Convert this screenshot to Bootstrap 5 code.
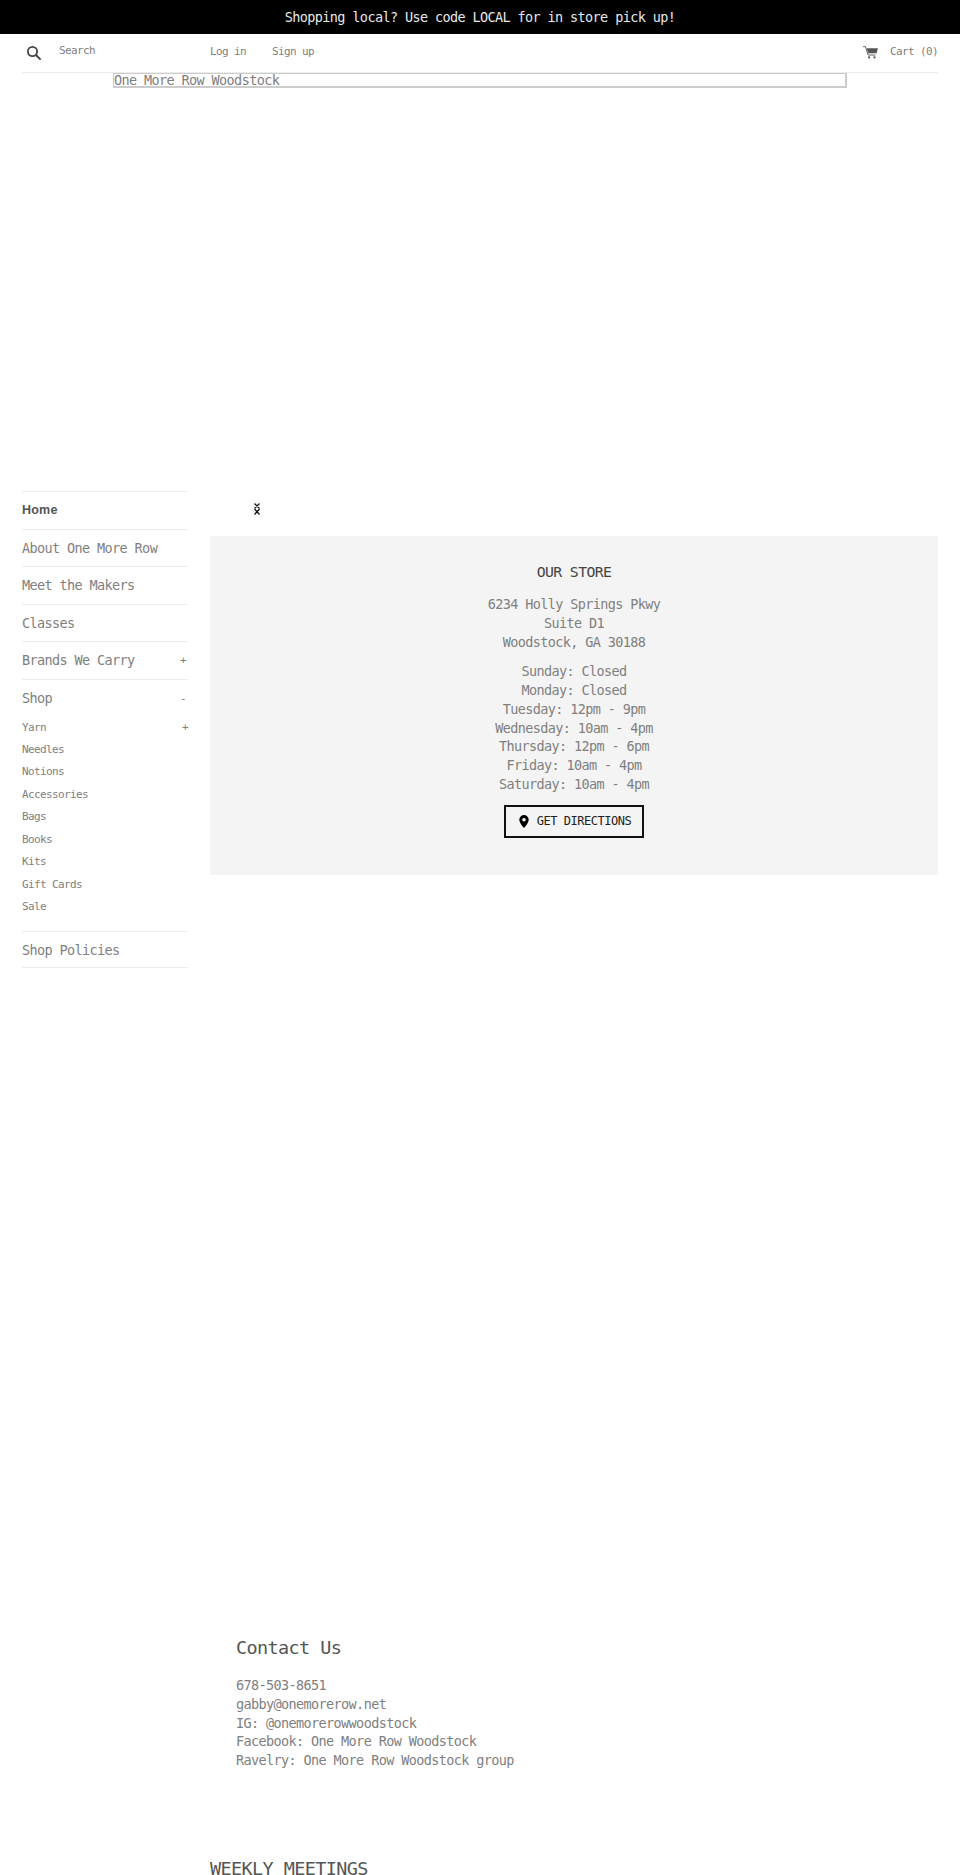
<!DOCTYPE html>
<html lang="en"><head><meta charset="utf-8"><title>One More Row Woodstock</title>
<link href="https://cdn.jsdelivr.net/npm/bootstrap@5.3.0/dist/css/bootstrap.min.css" rel="stylesheet">
<style>
:root{--ink:#808080;--dark:#3d4246;--rule:#ececec}
html,body{height:1875px;overflow:hidden}
body{font-family:"DejaVu Sans Mono",monospace;color:var(--ink);font-size:13.5px;letter-spacing:-.62px;line-height:18.75px;background:#fff}
a{color:inherit;text-decoration:none}
.promo{background:#000;color:#e8e8e8;height:33.5px;line-height:34px}
.masthead{margin:0 22px;height:39.5px;border-bottom:1px solid var(--rule);font-size:11px;letter-spacing:-.62px}
.search-slot{width:188px}
.search-label{margin-left:17px;margin-top:-3px}
.head-links{gap:26px}
.frame-box{margin-left:113px;width:734px;height:15px;border:1px solid #ccc;border-bottom-width:2px;border-right-width:2px;line-height:13px;color:#808080;display:block;margin-bottom:403px}
.page-cols{padding:0 22px;gap:22px}
.sidenav{width:166px;flex:none}
.side-item{height:37.6px;border-top:1px solid var(--rule);padding:0;line-height:37px}
.side-item:last-child{border-bottom:1px solid var(--rule)}
.side-home{font-family:"Liberation Sans",sans-serif;font-weight:700;font-size:12.5px;letter-spacing:.2px;color:#555}
.side-sign{font-size:11px;margin-right:2px}
.side-sub{font-size:11px;line-height:22.45px;padding:0 0 12px;margin:0;list-style:none}
.main-col{width:728px;flex:none}
.glyph-row{height:45px;padding-left:44px;padding-top:12px}
.store-panel{background:#f4f4f4;height:339px;padding-top:26px}
.store-title{font-size:14.75px;letter-spacing:-.6px;font-weight:400;color:#444;line-height:20px;margin:0 0 13px}
.store-text{margin:0 0 11px}
.dir-btn{border:2px solid #111;border-radius:0;background:transparent;color:#222;font-size:12px;letter-spacing:-.47px;height:33px;padding:0 11px 0 13px;line-height:29px;display:inline-flex;align-items:center;gap:8px}
.contact-block{margin:761px 0 0 26px}
.contact-title,.meet-title{font-size:18.500px;letter-spacing:-.62px;font-weight:400;color:#555;line-height:24px}
.contact-title{margin:0 0 16px}
.meet-title{margin:92px 0 0;line-height:14px}
</style></head><body>
<div class="promo text-center">Shopping local? Use code LOCAL for in store pick up!</div>
<header class="masthead d-flex align-items-center">
  <div class="search-slot d-flex align-items-center">
    <svg width="16" height="16" viewBox="0 0 16 16" class="ms-1" aria-hidden="true"><circle cx="6.500" cy="6.500" r="4.600" fill="none" stroke="#444" stroke-width="1.800"/><path d="M10 10l4.600 4.600" stroke="#444" stroke-width="2"/></svg>
    <span class="search-label">Search</span>
  </div>
  <nav class="head-links d-flex"><a href="#">Log in</a><a href="#">Sign up</a></nav>
  <a href="#" class="ms-auto d-flex align-items-center cart-link">
    <svg width="15" height="13" viewBox="0 0 16 14" class="me-2" aria-hidden="true"><path d="M0 .7h2.500l3 9h7.800" fill="none" stroke="#555" stroke-width="1"/><path d="M3.800 2.400H16l-1.400 5.400H5.600z" fill="#555"/><circle cx="6.500" cy="12.300" r="1.200" fill="#555"/><circle cx="12.300" cy="12.300" r="1.200" fill="#555"/></svg>
    <span class="ms-1">Cart (0)</span></a>
</header>
<div class="frame-box">One More Row Woodstock</div>
<div class="page-cols d-flex">
  <nav class="sidenav">
    <div class="side-item side-home">Home</div>
    <div class="side-item">About One More Row</div>
    <div class="side-item">Meet the Makers</div>
    <div class="side-item">Classes</div>
    <div class="side-item d-flex justify-content-between"><span>Brands We Carry</span><span class="side-sign">+</span></div>
    <div class="side-item d-flex justify-content-between"><span>Shop</span><span class="side-sign">-</span></div>
    <ul class="side-sub">
      <li class="d-flex justify-content-between"><span>Yarn</span><span>+</span></li>
      <li>Needles</li><li>Notions</li><li>Accessories</li><li>Bags</li><li>Books</li><li>Kits</li><li>Gift Cards</li><li>Sale</li>
    </ul>
    <div class="side-item">Shop Policies</div>
  </nav>
  <main class="main-col">
    <div class="glyph-row"><svg width="6" height="12" viewBox="0 0 6 12" class="d-block" aria-hidden="true"><path d="M.5 .5l5 5m0-5l-5 5M.5 6l5 5.500m0-5.500l-5 5.500" stroke="#111" stroke-width="1.300" fill="none"/></svg></div>
    <section class="store-panel text-center">
      <h2 class="store-title">OUR STORE</h2>
      <p class="store-text">6234 Holly Springs Pkwy<br>Suite D1<br>Woodstock, GA 30188</p>
      <p class="store-text">Sunday: Closed<br>Monday: Closed<br>Tuesday: 12pm - 9pm<br>Wednesday: 10am - 4pm<br>Thursday: 12pm - 6pm<br>Friday: 10am - 4pm<br>Saturday: 10am - 4pm</p>
      <a href="#" class="btn dir-btn"><svg width="10" height="13" viewBox="0 0 10 13" aria-hidden="true"><path fill-rule="evenodd" d="M5 0a4.700 4.700 0 0 1 4.700 4.700C9.700 8 5 13 5 13S.3 8 .3 4.700A4.700 4.700 0 0 1 5 0zm0 3a1.800 1.800 0 1 0 0 3.600A1.800 1.800 0 0 0 5 3z" fill="#000"/></svg>GET DIRECTIONS</a>
    </section>
    <section class="contact-block">
      <h2 class="contact-title">Contact Us</h2>
      <p class="mb-0">678-503-8651<br>gabby@onemorerow.net<br>IG: @onemorerowwoodstock<br>Facebook: One More Row Woodstock<br>Ravelry: One More Row Woodstock group</p>
    </section>
    <h2 class="meet-title">WEEKLY MEETINGS</h2>
  </main>
</div>
</body></html>
